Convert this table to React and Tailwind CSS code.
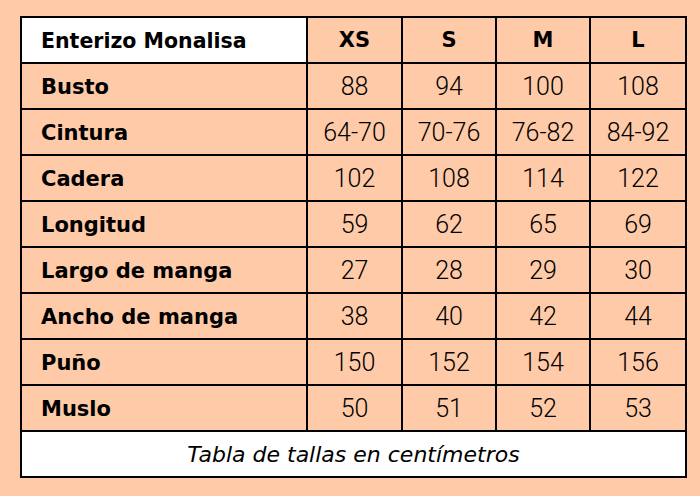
const sizes = ['XS', 'S', 'M', 'L'];

const rows = [
  ['Busto', '88', '94', '100', '108'],
  ['Cintura', '64-70', '70-76', '76-82', '84-92'],
  ['Cadera', '102', '108', '114', '122'],
  ['Longitud', '59', '62', '65', '69'],
  ['Largo de manga', '27', '28', '29', '30'],
  ['Ancho de manga', '38', '40', '42', '44'],
  ['Puño', '150', '152', '154', '156'],
  ['Muslo', '50', '51', '52', '53'],
];

export default function App() {
  return (
    <div className="w-[700px] h-[496px] bg-[#ffcaa8] pt-[16px] pl-[20px] font-['DejaVu_Sans',sans-serif] text-black">
      <table className="border-collapse table-fixed w-[665px]">
        <colgroup>
          <col className="w-[286px]" />
          <col className="w-[95px]" />
          <col className="w-[94px]" />
          <col className="w-[94px]" />
          <col className="w-[96px]" />
        </colgroup>
        <thead>
          <tr className="h-[46px]">
            <th className="border-2 border-black bg-white text-left pl-[19px] pt-[2px] text-[20.5px] font-bold">
              Enterizo Monalisa
            </th>
            {sizes.map((s) => (
              <th key={s} className="border-2 border-black text-center pt-[2px] text-[21px] font-bold">
                {s}
              </th>
            ))}
          </tr>
        </thead>
        <tbody>
          {rows.map((r) => (
            <tr key={r[0]} className="h-[46px]">
              <td className="border-2 border-black text-left pl-[19px] pt-[3px] text-[21px] font-bold">{r[0]}</td>
              {r.slice(1).map((v, i) => (
                <td key={i} className="border-2 border-black text-center pt-[2px] text-[25px] font-['Roboto',sans-serif] font-light">
                  {v}
                </td>
              ))}
            </tr>
          ))}
          <tr className="h-[46px]">
            <td colSpan={5} className="border-2 border-black bg-white text-center italic text-[22px]">
              Tabla de tallas en centímetros
            </td>
          </tr>
        </tbody>
      </table>
    </div>
  );
}
